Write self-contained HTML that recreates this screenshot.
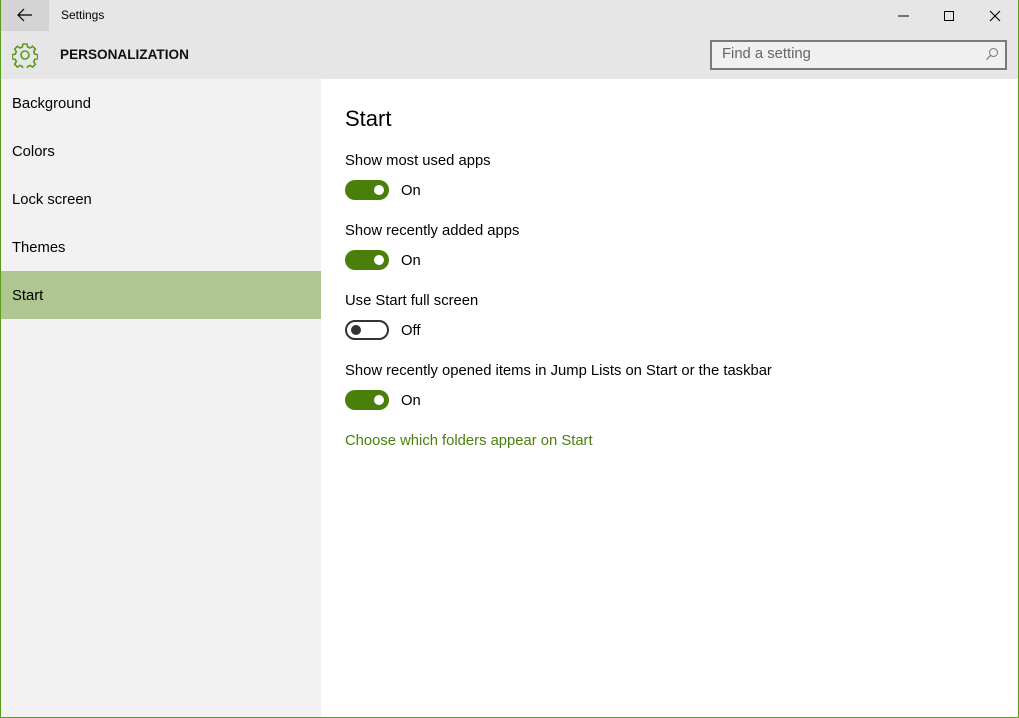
<!DOCTYPE html>
<html><head><style>
*{margin:0;padding:0;box-sizing:border-box}
body{width:1019px;height:718px;overflow:hidden;font-family:"Liberation Sans",sans-serif;background:#fff;position:relative;color:#000}
.frame{position:absolute;inset:0;border:1px solid #5a9a1c;border-top:none}
.top{position:absolute;left:1px;top:0;width:1017px;height:79px;background:#e6e6e6}
.back{position:absolute;left:1px;top:0;width:48px;height:31px;background:#d4d4d4}
.abs{position:absolute}
.side{position:absolute;left:1px;top:79px;width:320px;height:638px;background:#f2f2f2}
.nav{position:absolute;left:12px;font-size:14.8px}
.sel{position:absolute;left:1px;top:271px;width:320px;height:48px;background:#afc691}
.lbl{position:absolute;left:345px;font-size:14.8px}
.tog{position:absolute;left:345px;width:44px;height:20px;border-radius:10px;background:#4a7f0a}
.tog::after{content:"";position:absolute;left:29px;top:5px;width:10px;height:10px;border-radius:50%;background:#fff}
.tog.off{background:#fff;border:2px solid #333}
.tog.off::after{left:4px;top:3px;background:#333}
.st{position:absolute;left:401px;font-size:14.8px}
</style></head><body>
<div class="top"></div>
<div class="back"></div>
<svg class="abs" style="left:17px;top:8px" width="16" height="14" viewBox="0 0 16 14"><path d="M1 7H15M7 1L1 7L7 13" stroke="#000" stroke-width="1.2" fill="none"/></svg>
<div class="abs" style="left:61px;top:8px;font-size:12px">Settings</div>
<svg class="abs" style="left:896px;top:10px" width="110" height="12"><path d="M2 6H13" stroke="#000" stroke-width="1"/><rect x="48.5" y="1.5" width="9" height="9" fill="none" stroke="#000"/><path d="M94 1L104 11M104 1L94 11" stroke="#000" stroke-width="1.1"/></svg>
<svg class="abs" style="left:12px;top:42px" width="26" height="26" viewBox="0 0 26 26"><g fill="none" stroke="#5a9a1c" stroke-width="1.6"><circle cx="13" cy="13" r="4"/><path d="M11 2h4l.7 3 2.3 1 2.6-1.7 2.8 2.8-1.7 2.6 1 2.3 3 .7v4l-3 .7-1 2.3 1.7 2.6-2.8 2.8-2.6-1.7-2.3 1-.7 3h-4l-.7-3-2.3-1-2.6 1.7-2.8-2.8 1.7-2.6-1-2.3-3-.7v-4l3-.7 1-2.3-1.7-2.6 2.8-2.8 2.6 1.7 2.3-1z"/></g></svg>
<div class="abs" style="left:60px;top:47px;font-size:13.6px;font-weight:bold;color:#111">PERSONALIZATION</div>
<div class="abs" style="left:710px;top:40px;width:297px;height:30px;border:2px solid #7a7a7a;background:#f0f0f0"></div>
<div class="abs" style="left:722px;top:46px;font-size:14.8px;color:#666">Find a setting</div>
<svg class="abs" style="left:985px;top:47px" width="14" height="14"><circle cx="8.5" cy="5.5" r="4" fill="none" stroke="#777" stroke-width="1"/><path d="M5.5 8.5L1.5 12.5" stroke="#777" stroke-width="1.2"/></svg>
<div class="side"></div>
<div class="sel"></div>
<div class="nav" style="top:96px">Background</div>
<div class="nav" style="top:144px">Colors</div>
<div class="nav" style="top:192px">Lock screen</div>
<div class="nav" style="top:240px">Themes</div>
<div class="nav" style="top:288px">Start</div>
<div class="abs" style="left:345px;top:106px;font-size:22px">Start</div>
<div class="lbl" style="top:153px">Show most used apps</div>
<div class="tog" style="top:180px"></div><div class="st" style="top:183px">On</div>
<div class="lbl" style="top:223px">Show recently added apps</div>
<div class="tog" style="top:250px"></div><div class="st" style="top:253px">On</div>
<div class="lbl" style="top:293px">Use Start full screen</div>
<div class="tog off" style="top:320px"></div><div class="st" style="top:323px">Off</div>
<div class="lbl" style="top:363px">Show recently opened items in Jump Lists on Start or the taskbar</div>
<div class="tog" style="top:390px"></div><div class="st" style="top:393px">On</div>
<div class="lbl" style="top:433px;color:#4a7f0a">Choose which folders appear on Start</div>
<div class="frame"></div>
</body></html>
